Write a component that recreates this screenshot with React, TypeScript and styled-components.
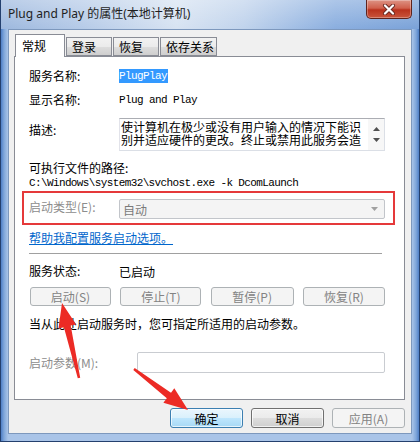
import React from "react";
import styled, { createGlobalStyle } from "styled-components";

const GlobalStyle = createGlobalStyle`
  html, body {
    margin: 0;
    padding: 0;
    background: #ffffff;
  }
  body {
    font-family: "Noto Sans", "Noto Sans CJK SC", sans-serif;
    font-size: 12px;
    color: #000000;
  }
`;

const CJK = `"Noto Sans CJK SC", "Noto Sans", sans-serif`;
const MONO = `"Liberation Mono", "Noto Sans CJK SC", monospace`;

// 箭头多边形：从尾部 (ax, ay) 指向尖端 (bx, by)
function arrowPoints(ax: number, ay: number, bx: number, by: number) {
  const dx = bx - ax;
  const dy = by - ay;
  const len = Math.hypot(dx, dy);
  const ux = dx / len;
  const uy = dy / len;
  const nx = -uy;
  const ny = ux;
  const head = 24;
  const hw = 9;
  const sw = 3.5;
  const tw = 1.2;
  const hx = bx - ux * head;
  const hy = by - uy * head;
  const pts = [
    [ax + nx * tw, ay + ny * tw],
    [hx + nx * sw, hy + ny * sw],
    [hx + nx * hw, hy + ny * hw],
    [bx, by],
    [hx - nx * hw, hy - ny * hw],
    [hx - nx * sw, hy - ny * sw],
    [ax - nx * tw, ay - ny * tw],
  ];
  return pts.map((p) => `${p[0].toFixed(1)},${p[1].toFixed(1)}`).join(" ");
}

const tabs = ["常规", "登录", "恢复", "依存关系"];
const serviceButtons = ["启动(S)", "停止(T)", "暂停(P)", "恢复(R)"];

export default function App() {
  return (
    <>
      <GlobalStyle />
      <Window>
        <TitleBar>
          <TitleText>Plug and Play 的属性(本地计算机)</TitleText>
          <CloseButton>
            <svg width="14" height="11" viewBox="0 0 14 11">
              <path
                d="M3 1.5 L11 9.5 M11 1.5 L3 9.5"
                stroke="#6a2a22"
                strokeWidth="4"
                strokeLinecap="round"
              />
              <path
                d="M3 1.5 L11 9.5 M11 1.5 L3 9.5"
                stroke="#ffffff"
                strokeWidth="2.2"
                strokeLinecap="round"
              />
            </svg>
          </CloseButton>
        </TitleBar>

        <Client>
          <TabRow>
            {tabs.map((t, i) => (
              <Tab key={t} $active={i === 0} $wide={t.length > 2}>
                {t}
              </Tab>
            ))}
          </TabRow>

          <Panel>
            <InfoRow>
              <Label>服务名称:</Label>
              <MonoValue>
                <Selected>PlugPlay</Selected>
              </MonoValue>
            </InfoRow>
            <InfoRow $gap={8}>
              <Label>显示名称:</Label>
              <MonoValue>Plug and Play</MonoValue>
            </InfoRow>
            <DescRow>
              <Label $offset={4}>描述:</Label>
              <DescBox>
                <DescText>
                  <DescLine>使计算机在极少或没有用户输入的情况下能识</DescLine>
                  <DescLine>别并适应硬件的更改。终止或禁用此服务会造</DescLine>
                </DescText>
                <ScrollBar>
                  <svg width="7" height="4" viewBox="0 0 7 4">
                    <path d="M0 4 L3.5 0 L7 4 Z" fill="#505050" />
                  </svg>
                  <svg width="7" height="4" viewBox="0 0 7 4">
                    <path d="M0 0 L3.5 4 L7 0 Z" fill="#505050" />
                  </svg>
                </ScrollBar>
              </DescBox>
            </DescRow>

            <PathLabel>可执行文件的路径:</PathLabel>
            <PathText>C:\Windows\system32\svchost.exe -k DcomLaunch</PathText>

            <Highlight>
              <Label $disabled>启动类型(E):</Label>
              <Combo>
                <span>自动</span>
                <svg width="7" height="4" viewBox="0 0 7 4">
                  <path d="M0 0 L3.5 4 L7 0 Z" fill="#a0a0a0" />
                </svg>
              </Combo>
            </Highlight>

            <HelpLink>帮助我配置服务启动选项。</HelpLink>
            <Separator />

            <InfoRow $gap={9}>
              <Label>服务状态:</Label>
              <StatusValue>已启动</StatusValue>
            </InfoRow>

            <ServiceButtons>
              {serviceButtons.map((b) => (
                <Button key={b} $variant="disabled">
                  {b}
                </Button>
              ))}
            </ServiceButtons>

            <Note>当从此处启动服务时，您可指定所适用的启动参数。</Note>

            <ParamRow>
              <Label $disabled>启动参数(M):</Label>
              <ParamInput />
            </ParamRow>
          </Panel>

          <DialogButtons>
            <Button $variant="default">确定</Button>
            <Button>取消</Button>
            <Button $variant="disabled">应用(A)</Button>
          </DialogButtons>
        </Client>

        <Overlay width="420" height="442" viewBox="0 0 420 442">
          <polygon points={arrowPoints(78, 378, 61, 303)} fill="#ec2b25" />
          <polygon points={arrowPoints(133, 369, 187, 410)} fill="#ec2b25" />
        </Overlay>
      </Window>
    </>
  );
}

const Window = styled.div`
  position: relative;
  width: 420px;
  height: 442px;
  box-sizing: border-box;
  display: flex;
  flex-direction: column;
  border: 1px solid #24406e;
  border-top: none;
  background: linear-gradient(
    to right,
    #4f7fc6 0px,
    #7fa6da 3px,
    #a9c4e8 7px,
    #a9c4e8 calc(100% - 7px),
    #7fa6da calc(100% - 3px),
    #4f7fc6 100%
  );
  overflow: hidden;
`;

const TitleBar = styled.div`
  height: 29px;
  display: flex;
  justify-content: space-between;
  align-items: flex-start;
  padding: 0 7px 0 7px;
  background: linear-gradient(
      to bottom,
      rgba(255, 255, 255, 0.3) 0%,
      rgba(255, 255, 255, 0) 100%
    ),
    linear-gradient(
      to right,
      #9db8de 0%,
      #b6cbe8 20%,
      #d7e3f2 42%,
      #c0d3ec 58%,
      #8aaedf 80%,
      #7aa2d8 100%
    );
`;

const TitleText = styled.div`
  padding-top: 6px;
  line-height: 16px;
  font-size: 12px;
  color: #1e1e1e;
  font-family: "Noto Sans", "Noto Sans CJK SC", sans-serif;
  white-space: nowrap;
`;

const CloseButton = styled.div`
  width: 46px;
  height: 19px;
  box-sizing: border-box;
  display: flex;
  align-items: center;
  justify-content: center;
  border: 1px solid #5e231d;
  border-top: none;
  border-radius: 0 0 5px 5px;
  background: linear-gradient(
    to bottom,
    #dd9384 0%,
    #d0604c 45%,
    #b9321d 55%,
    #c9553c 100%
  );
  box-shadow: inset 0 0 0 1px rgba(255, 255, 255, 0.3);
`;

const Client = styled.div`
  flex: 1;
  margin: 0 7px 7px 7px;
  box-sizing: border-box;
  border: 1px solid #7d98bd;
  background: #f0f0f0;
  padding: 4px 6px 0 5px;
  display: flex;
  flex-direction: column;
`;

const TabRow = styled.div`
  display: flex;
  align-items: flex-end;
  height: 22px;
  padding-left: 1px;
  position: relative;
  z-index: 1;
`;

const Tab = styled.div<{ $active?: boolean; $wide?: boolean }>`
  box-sizing: border-box;
  width: ${(p) => (p.$active ? 50 : p.$wide ? 57 : 46)}px;
  height: ${(p) => (p.$active ? 23 : 19)}px;
  margin-bottom: ${(p) => (p.$active ? -1 : 0)}px;
  margin-left: ${(p) => (p.$active ? 0 : 1)}px;
  border: 1px solid #898c95;
  border-bottom: ${(p) => (p.$active ? "none" : "1px solid #898c95")};
  background: ${(p) =>
    p.$active
      ? "#ffffff"
      : "linear-gradient(to bottom, #f2f2f2 0%, #ebebeb 50%, #dddddd 51%, #cfcfcf 100%)"};
  font-family: ${CJK};
  font-size: 12px;
  line-height: 16px;
  padding: ${(p) => (p.$active ? "3px 0 0 6px" : "1px 0 0 5px")};
  white-space: nowrap;
`;

const Panel = styled.div`
  box-sizing: border-box;
  height: 344px;
  border: 1px solid #898c95;
  background: #ffffff;
  padding: 11px 19px 0 14px;
  display: flex;
  flex-direction: column;
`;

const InfoRow = styled.div<{ $gap?: number }>`
  display: flex;
  align-items: center;
  height: 16px;
  margin-top: ${(p) => p.$gap ?? 0}px;
`;

const Label = styled.div<{ $disabled?: boolean; $offset?: number }>`
  width: 90px;
  flex-shrink: 0;
  font-family: ${CJK};
  font-size: 12px;
  line-height: 16px;
  color: ${(p) => (p.$disabled ? "#8d8d8d" : "#000000")};
  margin-top: ${(p) => p.$offset ?? 0}px;
  white-space: nowrap;
`;

const MonoValue = styled.div`
  font-family: ${MONO};
  font-size: 11px;
  letter-spacing: -0.6px;
  line-height: 14px;
  white-space: pre;
`;

const Selected = styled.span`
  display: inline-block;
  background: #3399ff;
  color: #ffffff;
  padding: 0 1px 0 0;
  line-height: 14px;
`;

const DescRow = styled.div`
  display: flex;
  align-items: flex-start;
  margin-top: 10px;
`;

const DescBox = styled.div`
  width: 266px;
  height: 33px;
  box-sizing: border-box;
  display: flex;
  border: 1px solid #dbdfe6;
  border-top-color: #abadb3;
  border-left-color: #e2e3ea;
`;

const DescText = styled.div`
  flex: 1;
  padding: 1px 0 0 1px;
  display: flex;
  flex-direction: column;
`;

const DescLine = styled.div`
  font-family: ${CJK};
  font-size: 12px;
  line-height: 13px;
  height: 13px;
  white-space: nowrap;
`;

const ScrollBar = styled.div`
  width: 16px;
  flex-shrink: 0;
  display: flex;
  flex-direction: column;
  align-items: center;
  justify-content: space-around;
  background: #f7f7f7;
  padding: 4px 0;
  box-sizing: border-box;
`;

const PathLabel = styled.div`
  margin-top: 9px;
  font-family: ${CJK};
  font-size: 12px;
  line-height: 16px;
`;

const PathText = styled.div`
  font-family: ${MONO};
  font-size: 11px;
  letter-spacing: -0.62px;
  line-height: 14px;
  white-space: pre;
`;

const Highlight = styled.div`
  margin: 1px -10px 0 -7px;
  height: 34px;
  box-sizing: border-box;
  border: 2px solid #e5393a;
  padding: 6px 8px 0 5px;
  display: flex;
  align-items: flex-start;
`;

const Combo = styled.div`
  flex: 1;
  height: 20px;
  box-sizing: border-box;
  border: 1px solid #c2c5ca;
  border-radius: 2px;
  background: #f4f4f4;
  display: flex;
  align-items: center;
  justify-content: space-between;
  padding: 0 6px 0 3px;
  font-family: ${CJK};
  font-size: 12px;
  color: #7a7a7a;
`;

const HelpLink = styled.div`
  margin-top: 6px;
  font-family: ${CJK};
  font-size: 12px;
  line-height: 14px;
  color: #0066cc;
  text-decoration: underline;
`;

const Separator = styled.div`
  margin: 8px 3px 0 0;
  height: 1px;
  background: #a0a0a0;
`;

const StatusValue = styled.div`
  font-family: ${CJK};
  font-size: 12px;
`;

const ServiceButtons = styled.div`
  margin-top: 8px;
  display: grid;
  grid-template-columns: 81px 81px 83px 82px;
  justify-content: space-between;
  padding-left: 1px;
`;

const Button = styled.div<{ $variant?: "default" | "disabled" }>`
  height: ${(p) => (p.$variant === "disabled" ? 19 : 20)}px;
  box-sizing: border-box;
  display: flex;
  align-items: center;
  justify-content: center;
  border-radius: 3px;
  font-family: ${CJK};
  font-size: 12px;
  white-space: nowrap;
  border: 1px solid
    ${(p) =>
      p.$variant === "default"
        ? "#3c7fb1"
        : p.$variant === "disabled"
          ? "#adb2b5"
          : "#707070"};
  color: ${(p) => (p.$variant === "disabled" ? "#838383" : "#000000")};
  background: ${(p) =>
    p.$variant === "default"
      ? "linear-gradient(to bottom, #eaf6fd 0%, #d9f0fc 50%, #bee6fd 51%, #a7d9f5 100%)"
      : p.$variant === "disabled"
        ? "#f4f4f4"
        : "linear-gradient(to bottom, #f2f2f2 0%, #ebebeb 50%, #dddddd 51%, #cfcfcf 100%)"};
  box-shadow: ${(p) =>
    p.$variant === "disabled" ? "none" : "inset 0 0 0 1px rgba(255,255,255,0.7)"};
`;

const Note = styled.div`
  margin-top: 10px;
  font-family: ${CJK};
  font-size: 12px;
  line-height: 16px;
  white-space: nowrap;
`;

const ParamRow = styled.div`
  margin-top: 20px;
  display: flex;
  align-items: center;
`;

const ParamInput = styled.div`
  margin-left: 18px;
  width: 250px;
  height: 21px;
  box-sizing: border-box;
  border: 1px solid #c9ccd1;
  border-radius: 2px;
  background: #ffffff;
`;

const DialogButtons = styled.div`
  margin-top: 8px;
  display: flex;
  justify-content: flex-end;
  gap: 8px;

  & > div {
    width: 73px;
    height: 20px;
  }
`;

const Overlay = styled.svg`
  position: absolute;
  left: 0;
  top: 0;
  pointer-events: none;
`;
